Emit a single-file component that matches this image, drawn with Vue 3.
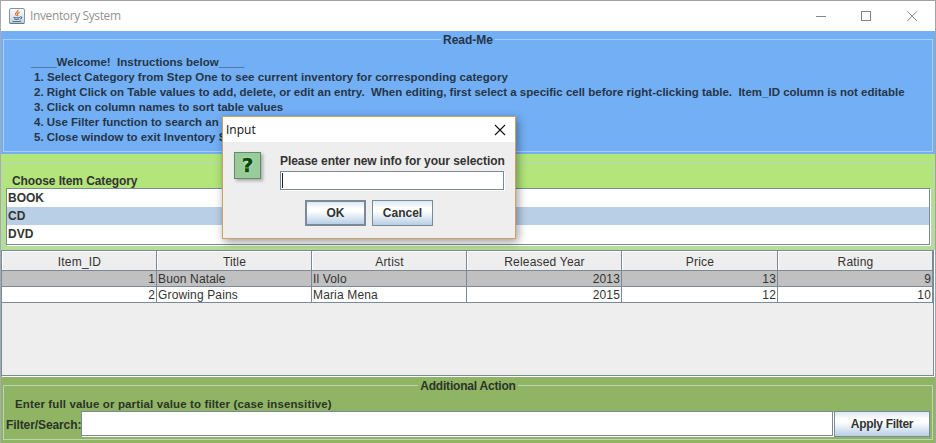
<script setup>
import { ref } from 'vue'

const instructions = [
  { text: '____Welcome!  Instructions below____', kind: 'l0' },
  { text: '1. Select Category from Step One to see current inventory for corresponding category', kind: 'l1' },
  { text: '2. Right Click on Table values to add, delete, or edit an entry.  When editing, first select a specific cell before right-clicking table.  Item_ID column is not editable', kind: 'l2' },
  { text: '3. Click on column names to sort table values', kind: 'l3' },
  { text: '4. Use Filter function to search an e', kind: 'l4' },
  { text: '5. Close window to exit Inventory S', kind: 'l5' }
]
const categories = ['BOOK', 'CD', 'DVD']
const selected = ref('CD')
const columns = ['Item_ID', 'Title', 'Artist', 'Released Year', 'Price', 'Rating']
const rows = [
  [1, 'Buon Natale', 'Il Volo', 2013, 13, 9],
  [2, 'Growing Pains', 'Maria Mena', 2015, 12, 10]
]
const filter = ref('')
</script>

<template>
  <main class="window">
    <header class="titlebar">
      <svg class="java" width="16" height="16" viewBox="0 0 16 16" fill="none">
        <defs>
          <linearGradient id="jbg" x1="0" y1="0" x2="0" y2="1">
            <stop offset="0" stop-color="#fbfcfd" /><stop offset="1" stop-color="#c9d5e0" />
          </linearGradient>
        </defs>
        <rect x=".5" y=".5" width="15" height="15" rx="1.5" fill="url(#jbg)" stroke="#8295a8" />
        <path d="M.7 15.4h14.6" stroke="#5e7488" />
        <path d="M8.9 1.8c.8 2-3.2 2.7-2.3 4.6.2.6.9 1 .9 1.7M10.6 4.1C8.9 4.9 8 5.5 8.6 6.5c.4.6.2 1.1-.4 1.6" stroke="#e07f3d" stroke-width="1.3" />
        <path d="M4.4 9.2c1.6.6 4.8.6 6.4 0M5 11c1.4.5 3.8.5 5.2 0M11.2 8.8c2.2-.4 1.9 1.7-.1 2.2M3.5 12.9c0 .8 7 .9 8.7 0" stroke="#457499" stroke-width="1.1" />
      </svg>
      <span class="app-name">Inventory System</span>
      <svg class="controls" width="104" height="12" viewBox="0 0 104 12" fill="none" stroke="#858585">
        <path d="M0 6.5h10" /><rect x="45.5" y="1.5" width="9" height="9" />
        <path d="M91.3 1.3l9.7 9.7M101 1.3l-9.7 9.7" />
      </svg>
    </header>

    <section class="readme">
      <div class="frame">
        <h2 class="legend">Read-Me</h2>
        <p v-for="line in instructions" :key="line.kind" class="line"><span :class="line.kind">{{ line.text }}</span></p>
      </div>
    </section>

    <section class="category">
      <div class="frame">
        <h3 class="choose">Choose Item Category</h3>
        <ul class="list">
          <li v-for="c in categories" :key="c" :class="{ on: c === selected }" @click="selected = c">{{ c }}</li>
        </ul>
      </div>
    </section>

    <section class="table-pane">
      <div class="grid head">
        <div v-for="c in columns" :key="c" class="th">{{ c }}</div>
      </div>
      <div v-for="(r, n) in rows" :key="n" class="grid row" :class="{ picked: n === 0 }">
        <div v-for="(v, i) in r" :key="i" class="td" :class="{ num: typeof v === 'number' }">{{ v }}</div>
      </div>
    </section>

    <section class="actions">
      <div class="frame">
        <h2 class="legend">Additional Action</h2>
        <p class="hint">Enter full value or partial value to filter (case insensitive)</p>
        <div class="search">
          <label for="filter">Filter/Search:</label>
          <input id="filter" v-model="filter" type="text" />
          <button class="btn">Apply Filter</button>
        </div>
      </div>
    </section>

    <div class="dialog" role="dialog">
      <div class="dialog-bar">
        <span>Input</span>
        <svg width="12" height="12" viewBox="0 0 12 12" stroke="#111" stroke-width="1.1"><path d="M1 1l10 10M11 1L1 11" /></svg>
      </div>
      <div class="dialog-body">
        <div class="question">?</div>
        <div class="form">
          <p class="prompt">Please enter new info for your selection</p>
          <div class="entry"><i class="caret"></i></div>
        </div>
      </div>
      <div class="buttons">
        <button class="btn ok">OK</button>
        <button class="btn">Cancel</button>
      </div>
    </div>
  </main>
</template>

<style>
body { margin: 0; overflow: hidden; }
</style>

<style scoped>
* { box-sizing: border-box; }
h2, h3, p, ul { margin: 0; padding: 0; font-size: inherit; font-weight: inherit; list-style: none; }
.window {
  position: relative; width: 936px; height: 443px; overflow: hidden;
  display: flex; flex-direction: column;
  border-top: 1px solid #a3a3a3; border-left: 1px solid #a5abae; border-right: 1px solid #a3a3a3;
  font: bold 12px/15px "Liberation Sans", Arial, sans-serif; color: #333;
  background: #fff; white-space: pre;
}
.titlebar { height: 30px; flex: none; display: flex; align-items: center; padding: 0 15px 0 8px; background: #fff; }
.app-name { margin-left: 5px; font: 12px/16px "Open Sans", "Noto Sans", sans-serif; color: #929292; letter-spacing: -.38px; }
.controls { margin-left: auto; }
.frame { border: 1px solid #b8cfe5; }
.legend { width: max-content; height: 15px; padding: 0 2px; line-height: 15px; }

.readme { height: 123px; flex: none; background: #73aff5; padding: 8px 2px 2px; color: #263547; }
.readme .frame { height: 113px; border-color: #a6cff8; }
.readme .legend { margin: -7px auto 7px; background: #73aff5; }
.line { height: 15px; padding-left: 30px; font-size: 11.5px; }
.line:nth-child(2) { padding-left: 27px; }
.l1 { letter-spacing: .05px; }

.category { height: 96px; flex: none; background: linear-gradient(#b3e57a 0 40%, #b5dd95); padding: 9px 2px 0; }
.category .frame { height: 87px; border-color: #b7d3c6; border-bottom: 0; padding: 9px 2px 0; }
.choose { height: 15px; padding-left: 6px; line-height: 16px; letter-spacing: -.1px; }
.list { height: 57px; background: #fff; border: 1px solid #7a8a99; box-shadow: 1px 1px 0 #fff; }
.list li { height: 18px; line-height: 19px; padding-left: 1px; }
.list .on { background: #b8cfe5; }

.table-pane { height: 126px; width: 933px; flex: none; background: #eee; border: 1px solid #7a8a99; box-shadow: 1px 1px 0 #fff; font-weight: normal; position: relative; }
.grid { display: grid; grid-template-columns: 155px 155px 155px 155px 156px 155px; width: 931px; }
.th { height: 20px; padding-left: 1px; border-right: 1px solid #7a8a99; border-bottom: 1px solid #7a8a99; box-shadow: inset 1px 1px #fff; text-align: center; line-height: 22px; letter-spacing: .2px; }
.td { height: 16px; border-right: 1px solid #7a8a99; border-bottom: 1px solid #7a8a99; background: #fff; line-height: 16px; padding: 0 1px; letter-spacing: .15px; }
.picked .td { background: #c0c0c0; }
.num { text-align: right; }

.actions { flex: 1; background: #8fb564; padding: 9px 2px 2px; color: #2c3328; }
.actions .frame { height: 55px; border-color: #bcd5b4; }
.actions .legend { margin: -7px auto 2px; background: #8fb564; letter-spacing: -.2px; }
.hint { height: 15px; line-height: 17px; padding-left: 11px; font-size: 11.5px; letter-spacing: .13px; }
.search { display: flex; align-items: flex-start; height: 26px; padding: 0 2px; }
.search label { width: 75px; line-height: 28px; letter-spacing: -.1px; }
.search input { width: 752px; height: 25px; padding: 0 4px; border: 1px solid #7a8a99; background: #fff; box-shadow: 1px 1px 0 #fff; outline: 0; }
.btn { font: bold 12px/15px "Liberation Sans", Arial, sans-serif; color: #333; border: 1px solid #7a8a99; border-radius: 0; padding: 0; background: linear-gradient(#dde8f3, #fff 30%, #fff 42%, #b8cfe5); }
.search .btn { width: 96px; height: 26px; margin-left: 1px; padding-top: 1px; letter-spacing: -.3px; }

.dialog { position: absolute; left: 221px; top: 115px; width: 294px; height: 123px; background: #eee; border: 1px solid #cba067; box-shadow: 2px 3px 9px rgba(0, 0, 0, .4); }
.dialog-bar { display: flex; align-items: center; justify-content: space-between; height: 25px; padding: 0 9px 0 3px; background: #fff; font: 12px/16px "Open Sans", "Noto Sans", sans-serif; color: #111; }
.dialog-body { display: flex; padding: 10px 0 0 11px; height: 58px; }
.question { width: 27px; height: 27px; flex: none; border: 1px solid #668b6b; background: #99cc99; box-shadow: 2px 2px 3px #aaa; color: #064b0a; font: bold 20px/25px "DejaVu Sans", sans-serif; text-align: center; -webkit-text-stroke: .5px #064b0a; text-shadow: 0 0 2px #e0ffe0, 0 0 2px #e0ffe0; }
.form { margin-left: 19px; }
.prompt { height: 19px; line-height: 18px; letter-spacing: -.05px; }
.entry { width: 224px; height: 19px; border: 1px solid #7a8a99; background: #fff; box-shadow: 1px 1px 0 #fff; padding: 1px; }
.caret { display: block; width: 1px; height: 15px; background: #222; }
.buttons { display: flex; gap: 6px; padding-left: 82px; }
.buttons .btn { width: 61px; height: 26px; }
.buttons .ok { border-width: 2px; }
</style>
